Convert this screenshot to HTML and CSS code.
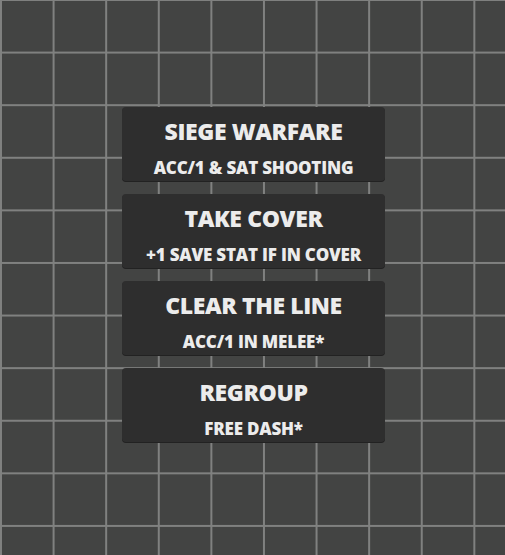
FILE: index.html
```html
<!DOCTYPE html>
<html lang="en">
  <head>
    <meta charset="UTF-8" />
    <meta name="viewport" content="width=device-width, initial-scale=1.0" />
    <title>Orders</title>
    <link rel="stylesheet" href="styles.css">
  </head>
  <body>
    <div class="order-list">
      <div class="order">
        <div class="order-name">SIEGE WARFARE</div>
        <div class="order-effect">ACC/1 &amp; SAT SHOOTING</div>
      </div>
      <div class="order">
        <div class="order-name">TAKE COVER</div>
        <div class="order-effect">+1 SAVE STAT IF IN COVER</div>
      </div>
      <div class="order">
        <div class="order-name">CLEAR THE LINE</div>
        <div class="order-effect">ACC/1 IN MELEE*</div>
      </div>
      <div class="order">
        <div class="order-name">REGROUP</div>
        <div class="order-effect">FREE DASH*</div>
      </div>
    </div>
  </body>
</html>
```

FILE: styles.css
```css
html, body {
  margin: 0;
  height: 100%;
}

body {
  background-color: #434443;
  background-image:
    linear-gradient(to right, #808180 2px, transparent 2px),
    linear-gradient(to bottom, #808180 2px, transparent 2px);
  background-size: 52.6px 52.6px;
  background-position: 0 -1px;
  font-family: "Open Sans", sans-serif;
  overflow: hidden;
}

.order-list {
  display: flex;
  flex-direction: column;
  align-items: center;
  gap: 13px;
  padding-top: 107px;
  padding-left: 2px;
}

.order {
  box-sizing: border-box;
  width: 263px;
  height: 74px;
  background-color: #2e2e2e;
  border-radius: 4px;
  box-shadow: 0 1px 0 #222;
  color: #ececec;
  text-align: center;
  display: flex;
  flex-direction: column;
  align-items: center;
  padding-top: 9px;
}

.order-name {
  font-size: 23px;
  font-weight: 800;
  line-height: 30px;
  letter-spacing: -0.4px;
}

.order-effect {
  font-size: 17px;
  font-weight: 800;
  line-height: 22px;
  margin-top: 11px;
  letter-spacing: -0.2px;
}
```
